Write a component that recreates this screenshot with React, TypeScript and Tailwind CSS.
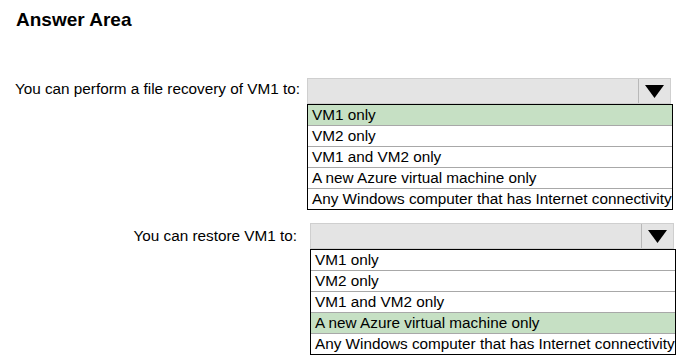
import React from "react";

const options = [
  "VM1 only",
  "VM2 only",
  "VM1 and VM2 only",
  "A new Azure virtual machine only",
  "Any Windows computer that has Internet connectivity",
];

function Dropdown({ selected }: { selected: number }) {
  return (
    <div className="flex flex-col">
      <div className="w-[364px] h-[26px] flex bg-[#e4e4e4] border border-[#cfcfcf]">
        <div className="flex-1" />
        <div className="w-[32px] h-full border-l border-[#b8b8b8] flex items-center justify-center">
          <svg width="19" height="13" viewBox="0 0 19 13">
            <polygon points="0,0 19,0 9.5,13" fill="#000" />
          </svg>
        </div>
      </div>
      <div className="w-[366px] border border-black bg-white">
        {options.map((o, i) => (
          <div
            key={o}
            className={`h-[20px] leading-[20px] pl-[4px] whitespace-nowrap ${
              i > 0 ? "border-t border-[#a8a8a8] h-[21px]" : ""
            } ${i === selected ? "bg-[#c6e0c4]" : ""}`}
          >
            {o}
          </div>
        ))}
      </div>
    </div>
  );
}

export default function App() {
  return (
    <div
      className="w-[682px] h-[361px] bg-white text-black text-[15.3px] leading-[20px] overflow-hidden"
      style={{ fontFamily: '"Liberation Sans", Arial, sans-serif' }}
    >
      <div className="pt-[10px] pl-[16px] text-[19px] leading-[20px] font-bold">Answer Area</div>
      <div className="mt-[48px] flex items-start">
        <div className="w-[300px] text-right mt-[1px] whitespace-nowrap">
          You can perform a file recovery of VM1 to:
        </div>
        <div className="ml-[7px]">
          <Dropdown selected={0} />
        </div>
      </div>
      <div className="mt-[13px] flex items-start">
        <div className="w-[297px] text-right mt-[3px] whitespace-nowrap">You can restore VM1 to:</div>
        <div className="ml-[13px]">
          <Dropdown selected={3} />
        </div>
      </div>
    </div>
  );
}
